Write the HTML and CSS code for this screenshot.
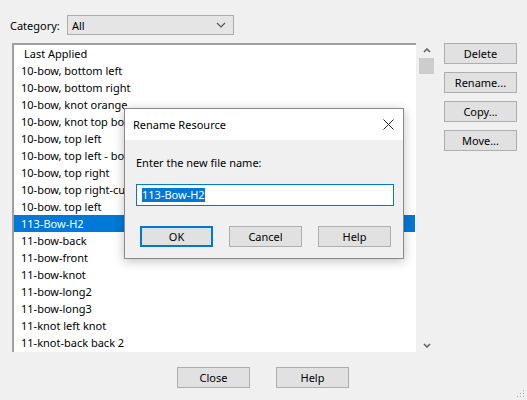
FILE: index.html
```
<!DOCTYPE html>
<html lang="en">

<head>
    <meta charset="UTF-8">
    <meta name="viewport" content="width=device-width, initial-scale=1.0">
    <title>Resources</title>
    <link rel="stylesheet" href="styles.css">
</head>

<body>
    <div class="window">

        <div class="category-row">
            <label class="category-label">Category:</label>
            <div class="select">
                <span>All</span>
                <svg class="chevron" width="10" height="6" viewBox="0 0 10 6">
                    <path d="M1 1 L5 5 L9 1" fill="none" stroke="#555" stroke-width="1.2" />
                </svg>
            </div>
        </div>

        <div class="main-row">
            <div class="list">
                <div class="row first">Last Applied</div>
                <div class="row">10-bow, bottom left</div>
                <div class="row">10-bow, bottom right</div>
                <div class="row">10-bow, knot orange</div>
                <div class="row">10-bow, knot top bow</div>
                <div class="row">10-bow, top left</div>
                <div class="row">10-bow, top left - bow</div>
                <div class="row">10-bow, top right</div>
                <div class="row">10-bow, top right-cut</div>
                <div class="row">10-bow. top left</div>
                <div class="row selected">113-Bow-H2</div>
                <div class="row">11-bow-back</div>
                <div class="row">11-bow-front</div>
                <div class="row">11-bow-knot</div>
                <div class="row">11-bow-long2</div>
                <div class="row">11-bow-long3</div>
                <div class="row">11-knot left knot</div>
                <div class="row">11-knot-back back 2</div>
            </div>

            <div class="scrollbar">
                <svg class="arrow" width="8" height="5" viewBox="0 0 8 5">
                    <path d="M1 4 L4 1 L7 4" fill="none" stroke="#606060" stroke-width="1.5" />
                </svg>
                <div class="thumb"></div>
                <div class="track"></div>
                <svg class="arrow" width="8" height="5" viewBox="0 0 8 5">
                    <path d="M1 1 L4 4 L7 1" fill="none" stroke="#606060" stroke-width="1.5" />
                </svg>
            </div>

            <div class="side-buttons">
                <button class="btn">Delete</button>
                <button class="btn">Rename...</button>
                <button class="btn">Copy...</button>
                <button class="btn">Move...</button>
            </div>
        </div>

        <div class="bottom-row">
            <button class="btn">Close</button>
            <button class="btn">Help</button>
        </div>

        <svg class="grip" width="8" height="8" viewBox="0 0 8 8">
            <rect x="6" y="0" width="1" height="1" fill="#aaa" />
            <rect x="3" y="3" width="1" height="1" fill="#aaa" />
            <rect x="6" y="3" width="1" height="1" fill="#aaa" />
            <rect x="0" y="6" width="1" height="1" fill="#aaa" />
            <rect x="3" y="6" width="1" height="1" fill="#aaa" />
            <rect x="6" y="6" width="1" height="1" fill="#aaa" />
        </svg>

        <!-- modal over the list -->
        <div class="dialog">
            <div class="dialog-title">
                <span>Rename Resource</span>
                <svg width="11" height="11" viewBox="0 0 11 11">
                    <path d="M0.5 0.5 L10.5 10.5 M10.5 0.5 L0.5 10.5" stroke="#222" stroke-width="1" />
                </svg>
            </div>
            <div class="dialog-body">
                <div class="prompt">Enter the new file name:</div>
                <div class="name-input"><span class="sel">113-Bow-H2</span></div>
                <div class="dialog-buttons">
                    <button class="btn default">OK</button>
                    <button class="btn">Cancel</button>
                    <button class="btn">Help</button>
                </div>
            </div>
        </div>
    </div>
</body>

</html>
```

FILE: styles.css
```
body {
    margin: 0;
    background-color: #f0f0f0;
    font-family: "Noto Sans", "Open Sans", sans-serif;
    font-size: 11px;
    color: #000;
}

.window {
    position: relative;
    width: 527px;
    height: 400px;
    overflow: hidden;
}

.category-row {
    display: flex;
    align-items: center;
    padding: 15px 0 0 10px;
    height: 20px;
}

.category-label {
    width: 57px;
}

.select {
    display: flex;
    align-items: center;
    justify-content: space-between;
    width: 154px;
    height: 18px;
    padding: 0 7px 0 4px;
    box-sizing: content-box;
    background-color: #e5e5e5;
    border: 1px solid #adadad;
}

.main-row {
    display: flex;
    margin-top: 8px;
    margin-left: 12px;
}

.list {
    width: 402px;
    height: 307px;
    background-color: #fff;
    border-top: 2px solid #a0a0a0;
    border-left: 2px solid #a0a0a0;
    overflow: hidden;
}

.row {
    height: 17px;
    line-height: 17px;
    padding-left: 7px;
    white-space: nowrap;
}

.row.first {
    padding-left: 10px;
}

.row.selected {
    background-color: #0078d7;
    color: #fff;
    margin-right: 1px;
}

.scrollbar {
    display: flex;
    flex-direction: column;
    align-items: center;
    width: 21px;
    height: 309px;
    padding-top: 5px;
    box-sizing: border-box;
}

.scrollbar .arrow {
    flex: none;
}

.thumb {
    width: 15px;
    height: 16px;
    margin-top: 5px;
    background-color: #cdcdcd;
}

.track {
    flex: 1;
}

.scrollbar .arrow:last-child {
    margin-bottom: 4px;
}

.side-buttons {
    display: flex;
    flex-direction: column;
    gap: 8px;
    margin-left: 7px;
}

.btn {
    width: 73px;
    height: 21px;
    padding: 0;
    background-color: #e1e1e1;
    border: 1px solid #adadad;
    font-family: inherit;
    font-size: 11px;
    color: #000;
}

.bottom-row {
    display: flex;
    gap: 26px;
    margin-top: 15px;
    margin-left: 177px;
}

.grip {
    position: absolute;
    right: 2px;
    bottom: 2px;
}

.dialog {
    position: absolute;
    left: 124px;
    top: 108px;
    width: 280px;
    height: 151px;
    box-sizing: border-box;
    border: 1px solid #8a8a8a;
    background-color: #f0f0f0;
    box-shadow: 0 2px 10px rgba(0, 0, 0, 0.25);
}

.dialog-title {
    display: flex;
    align-items: center;
    justify-content: space-between;
    height: 31px;
    padding: 0 9px 0 8px;
    background-color: #fff;
}

.dialog-body {
    padding: 14px 9px 0 11px;
}

.prompt {
    height: 17px;
    line-height: 17px;
}

.name-input {
    display: flex;
    align-items: center;
    width: 258px;
    height: 22px;
    margin-top: 13px;
    box-sizing: border-box;
    border: 1px solid #0078d7;
    background-color: #fff;
    padding-left: 5px;
}

.sel {
    background-color: #0078d7;
    color: #fff;
    line-height: 14px;
}

.dialog-buttons {
    display: flex;
    gap: 16px;
    margin-top: 20px;
    margin-left: 4px;
}

.btn.default {
    border: 2px solid #0078d7;
}
```
